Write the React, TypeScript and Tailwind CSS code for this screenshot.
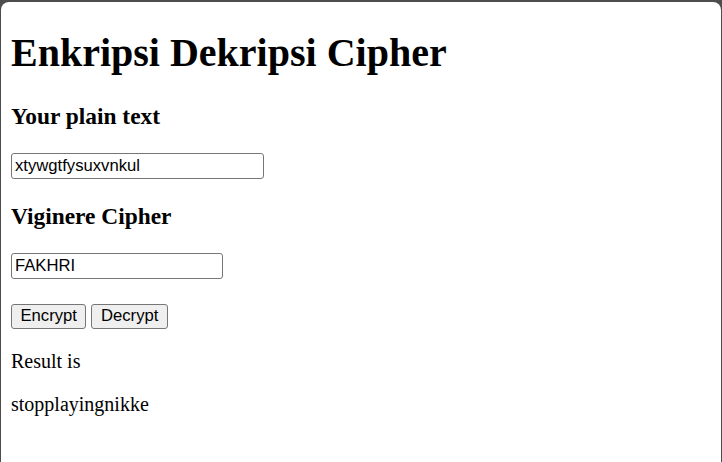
import { useState } from "react";

export default function App() {
  const [plain, setPlain] = useState("xtywgtfysuxvnkul");
  const [key, setKey] = useState("FAKHRI");

  return (
    <div className="h-[462px] w-[722px] overflow-hidden bg-[#4d4d4d] pt-[2px] px-[1px]">
      <div className="h-[460px] rounded-t-[8px] bg-white px-[10px] font-['Liberation_Serif',serif] text-black">
        <h1 className="pt-[28px] text-[40px] leading-[46px] font-bold">Enkripsi Dekripsi Cipher</h1>

        <h3 className="mt-[27px] text-[23.4px] leading-[27px] font-bold">Your plain text</h3>
        <input
          className="mt-[23px] block h-[26px] w-[253px] rounded-[3px] border border-[#767676] px-[3px] font-['Liberation_Sans',sans-serif] text-[16.67px] text-black outline-none"
          value={plain}
          onChange={(e) => setPlain(e.target.value)}
        />

        <h3 className="mt-[23.5px] text-[23.4px] leading-[27px] font-bold">Viginere Cipher</h3>
        <input
          className="mt-[23.5px] block h-[26px] w-[212px] rounded-[3px] border border-[#767676] px-[3px] font-['Liberation_Sans',sans-serif] text-[16.67px] text-black outline-none"
          value={key}
          onChange={(e) => setKey(e.target.value)}
        />

        {/* buttons */}
        <div className="mt-[25px] flex gap-[5px]">
          <button className="h-[25px] rounded-[3px] border border-[#767676] bg-[#efefef] px-[8.5px] font-['Liberation_Sans',sans-serif] text-[16.67px] leading-none text-black">
            Encrypt
          </button>
          <button className="h-[25px] rounded-[3px] border border-[#767676] bg-[#efefef] px-[8.5px] font-['Liberation_Sans',sans-serif] text-[16.67px] leading-none text-black">
            Decrypt
          </button>
        </div>

        <p className="mt-[21px] text-[20px] leading-[23px]">Result is</p>
        <p className="mt-[20px] text-[20px] leading-[23px]">stopplayingnikke</p>
      </div>
    </div>
  );
}
